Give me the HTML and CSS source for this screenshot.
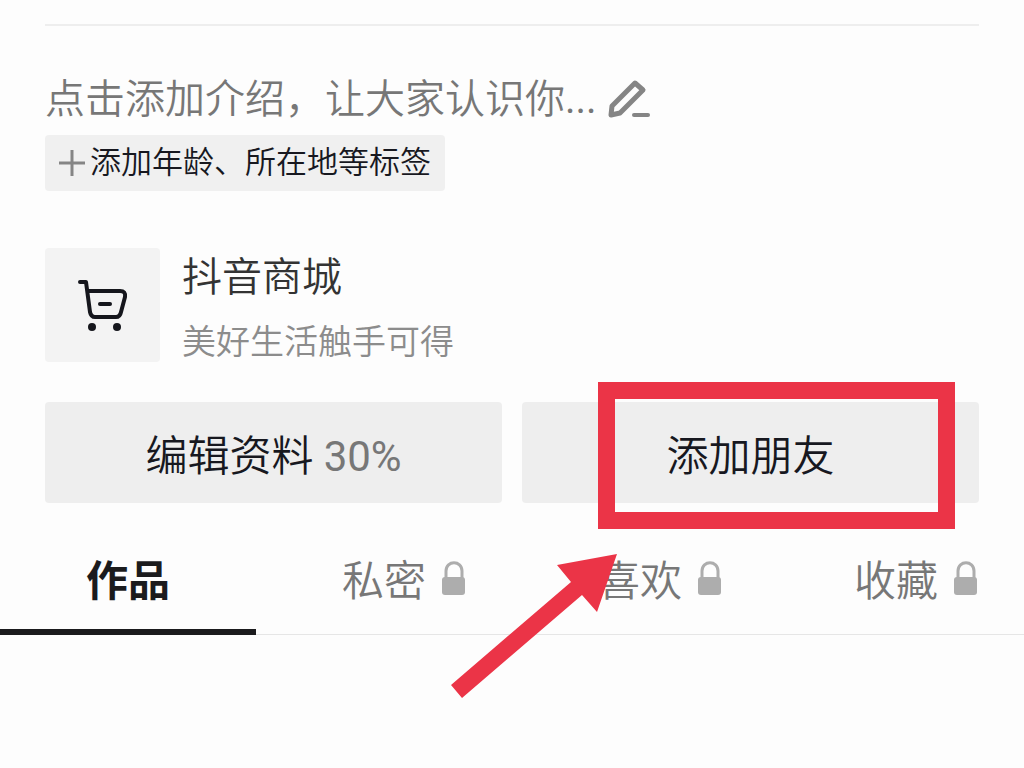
FILE: index.html
```
<!DOCTYPE html>
<html lang="zh-CN">
	<head>
		<meta charset="UTF-8">
		<meta name="viewport" content="width=device-width, initial-scale=1">
		<title>个人主页</title>
		<link rel="stylesheet" href="styles.css">
	</head>
	<body>
		<div class="profile">
			<a class="intro" href="#">
				<span>点击添加介绍，让大家认识你<span class="dots">...</span></span>
				<svg class="pen" width="44" height="44" viewBox="0 0 44 44" fill="none" stroke="#858585" stroke-width="5" stroke-linejoin="round">
					<path d="M4 37L5 28L28 5L36 12L13 35Z"/>
					<path d="M27 37H41" stroke-width="4" stroke-linecap="round"/>
				</svg>
			</a>
			<button class="tag" type="button">
				<svg width="26" height="26" viewBox="0 0 26 26" stroke="#858585" stroke-width="3">
					<path d="M0 13H26M13 0V26"/>
				</svg>
				<span>添加年龄、所在地等标签</span>
			</button>

			<a class="shop" href="#">
				<span class="shop-icon">
					<svg width="52" height="52" viewBox="0 0 52 52" fill="none" stroke="#15161c" stroke-width="4" stroke-linecap="round" stroke-linejoin="round">
						<path d="M3 3H9L13 33Q14 38 18 38H39Q43 38 44 33L48 18Q49 12 43 12H11"/>
						<path d="M23 25H33"/>
						<circle cx="15" cy="48" r="4" fill="#15161c" stroke="none"/>
						<circle cx="40" cy="48" r="4" fill="#15161c" stroke="none"/>
					</svg>
				</span>
				<span class="shop-text">
					<span class="shop-name">抖音商城</span>
					<span class="shop-desc">美好生活触手可得</span>
				</span>
			</a>

			<div class="actions">
				<button class="btn" type="button">编辑资料 <span class="percent">30%</span></button>
				<div class="marked">
					<button class="btn" type="button">添加朋友</button>
					<div class="mark-box"></div>
					<svg class="mark-arrow" width="166" height="144" viewBox="0 0 166 144" fill="#eb3447">
						<path d="M166 0L146 58L131 41L11 144L0 131L120 28L106 11Z"/>
					</svg>
				</div>
			</div>
		</div>

		<nav class="tabs">
			<a class="tab active" href="#">作品</a>
			<a class="tab locked" href="#">私密
				<svg class="lock" width="24" height="36" viewBox="0 0 24 36" fill="#adadad">
					<path d="M4 20V12C4 1 20 1 20 12V20" fill="none" stroke="#adadad" stroke-width="3"/>
					<rect x="0" y="18" width="23" height="18" rx="3"/>
				</svg>
			</a>
			<a class="tab locked" href="#">喜欢
				<svg class="lock" width="24" height="36" viewBox="0 0 24 36" fill="#adadad">
					<path d="M4 20V12C4 1 20 1 20 12V20" fill="none" stroke="#adadad" stroke-width="3"/>
					<rect x="0" y="18" width="23" height="18" rx="3"/>
				</svg>
			</a>
			<a class="tab locked" href="#">收藏
				<svg class="lock" width="24" height="36" viewBox="0 0 24 36" fill="#adadad">
					<path d="M4 20V12C4 1 20 1 20 12V20" fill="none" stroke="#adadad" stroke-width="3"/>
					<rect x="0" y="18" width="23" height="18" rx="3"/>
				</svg>
			</a>
		</nav>
	</body>
</html>
```
FILE: styles.css
```
*{
	box-sizing: border-box;
}
body{
	display: flow-root;
	min-height: 100vh;
	margin: 0;
	background: #fdfdfd;
	color: #17181f;
	font-family: Roboto, "Noto Sans CJK SC", sans-serif;
	font-weight: 350;
}
a{
	color: inherit;
	text-decoration: none;
}
button{
	border: 0;
	color: inherit;
	font: inherit;
}
.profile{
	margin: 24px 45px 0;
	padding-top: 46px;
	border-top: 2px solid #eee;
}
.intro{
	display: flex;
	align-items: center;
	gap: 10px;
	color: #777;
	font-size: 40px;
	line-height: 56px;
}
.dots{
	font-weight: 400;
}
.pen{
	flex: none;
}
.tag{
	display: flex;
	align-items: center;
	gap: 5px;
	margin-top: 7px;
	padding: 4px 14px;
	border-radius: 4px;
	background: #f0f0f0;
	font-size: 31px;
	line-height: 48px;
}
.shop{
	display: flex;
	align-items: flex-start;
	gap: 22px;
	margin-top: 57px;
}
.shop-icon{
	display: flex;
	align-items: center;
	justify-content: center;
	width: 115px;
	height: 114px;
	border-radius: 4px;
	background: #f3f3f3;
}
.shop-text{
	display: flex;
	flex-direction: column;
	gap: 12px;
	padding-top: 4px;
	line-height: 52px;
}
.shop-name{
	color: #333;
	font-size: 40px;
}
.shop-desc{
	color: #8c8c8c;
	font-size: 34px;
}
.actions{
	display: grid;
	grid-template-columns: 1fr 1fr;
	gap: 20px;
	margin-top: 34px;
}
.btn{
	width: 100%;
	height: 101px;
	border-radius: 4px;
	background: #eee;
	font-size: 42px;
}
.percent{
	color: #777;
	font-weight: 400;
}
/* 红框和箭头盖在按钮上面 */
.marked{
	position: relative;
}
.mark-box{
	position: absolute;
	top: -20px;
	right: 24px;
	bottom: -26px;
	left: 76px;
	border: 17px solid #eb3447;
	pointer-events: none;
}
.mark-arrow{
	position: absolute;
	top: 152px;
	left: -71px;
	z-index: 1;
	pointer-events: none;
}
.tabs{
	display: grid;
	grid-template-columns: repeat(4, 1fr);
	margin-top: 26px;
	border-bottom: 1px solid #e6e6e6;
}
.tab{
	display: flex;
	align-items: center;
	justify-content: center;
	gap: 16px;
	height: 106px;
	margin-bottom: -1px;
	padding-bottom: 4px;
	border-bottom: 6px solid transparent;
	color: #777;
	font-size: 42px;
}
.tab.active{
	border-color: #1b1b1d;
	color: #1b1b1d;
	font-weight: bold;
}
/* 左边留出锁的宽度，文字才能居中 */
.tab.locked{
	padding-left: 40px;
}
```
